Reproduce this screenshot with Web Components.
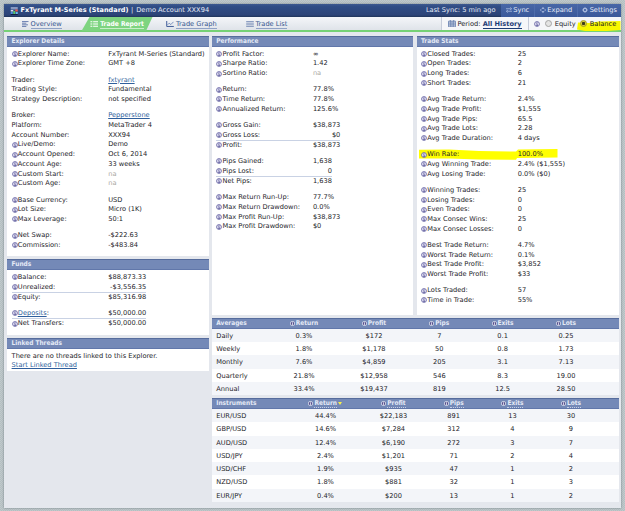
<!DOCTYPE html>
<html lang="en">
<head>
<meta charset="utf-8">
<title>FxTyrant M-Series (Standard)</title>
<style>
  html, body{ height: 100%; }
  body{
    margin: 0;
    padding: 4px 4px 0;
    box-sizing: border-box;
    overflow: hidden;
    background: #bac4c7 repeating-conic-gradient(#b4bfc2 0 25%, #c1cacc 0 50%) 0 0 / 2px 2px;
    font: 6.65px/9.77px "DejaVu Sans", Verdana, sans-serif;
    color: #1c1c28;
    text-rendering: geometricPrecision;
  }
</style>
</head>
<body>
<fx-app></fx-app>

<script>
/* ============================================================
   Data. "?" marks a label with an info icon, "~" a muted value,
   "@" a link, "=" a total under a rule and "!" a marked row.
   ============================================================ */
const EXPLORER = [
  [["?Explorer Name", "FxTyrant M-Series (Standard)"], ["?Explorer Time Zone", "GMT +8"]],
  [["Trader", "@fxtyrant"], ["Trading Style", "Fundamental"], ["Strategy Description", "not specified"]],
  [["Broker", "@Pepperstone"], ["Platform", "MetaTrader 4"], ["Account Number", "XXX94"], ["?Live/Demo", "Demo"],
   ["?Account Opened", "Oct 6, 2014"], ["?Account Age", "33 weeks"], ["?Custom Start", "~na"], ["?Custom Age", "~na"]],
  [["?Base Currency", "USD"], ["?Lot Size", "Micro (1K)"], ["?Max Leverage", "50:1"]],
  [["?Net Swap", "-$222.63"], ["?Commission", "-$483.84"]]
];
const FUNDS = [
  [["?Balance", "$88,873.33"], ["?Unrealized", "-$3,556.35"], ["=?Equity", "$85,316.98"]],
  [["?@Deposits", "$50,000.00"], ["=?Net Transfers", "$50,000.00"]]
];
const PERFORMANCE = [
  [["?Profit Factor", "∞"], ["?Sharpe Ratio", "1.42"], ["?Sortino Ratio", "~na"]],
  [["?Return", "77.8%"], ["?Time Return", "77.8%"], ["?Annualized Return", "125.6%"]],
  [["?Gross Gain", "$38,873"], ["?Gross Loss", "$0"], ["=?Profit", "$38,873"]],
  [["?Pips Gained", "1,638"], ["?Pips Lost", "0"], ["=?Net Pips", "1,638"]],
  [["?Max Return Run-Up", "77.7%"], ["?Max Return Drawdown", "0.0%"], ["?Max Profit Run-Up", "$38,873"], ["?Max Profit Drawdown", "$0"]]
];
const TRADES = [
  [["?Closed Trades", "25"], ["?Open Trades", "2"], ["?Long Trades", "6"], ["?Short Trades", "21"]],
  [["?Avg Trade Return", "2.4%"], ["?Avg Trade Profit", "$1,555"], ["?Avg Trade Pips", "65.5"], ["?Avg Trade Lots", "2.28"], ["?Avg Trade Duration", "4 days"]],
  [["!?Win Rate", "100.0%"], ["?Avg Winning Trade", "2.4% ($1,555)"], ["?Avg Losing Trade", "0.0% ($0)"]],
  [["?Winning Trades", "25"], ["?Losing Trades", "0"], ["?Even Trades", "0"], ["?Max Consec Wins", "25"], ["?Max Consec Losses", "0"]],
  [["?Best Trade Return", "4.7%"], ["?Worst Trade Return", "0.1%"], ["?Best Trade Profit", "$3,852"], ["?Worst Trade Profit", "$33"]],
  [["?Lots Traded", "57"], ["?Time in Trade", "55%"]]
];
const AVERAGES = {
  head: ["Averages", "Return", "Profit", "Pips", "Exits", "Lots"],
  rows: [
    ["Daily", "0.3%", "$172", "7", "0.1", "0.25"],
    ["Weekly", "1.8%", "$1,178", "50", "0.8", "1.73"],
    ["Monthly", "7.6%", "$4,859", "205", "3.1", "7.13"],
    ["Quarterly", "21.8%", "$12,958", "546", "8.3", "19.00"],
    ["Annual", "33.4%", "$19,437", "819", "12.5", "28.50"]
  ]
};
const INSTRUMENTS = {
  head: ["Instruments", "Return", "Profit", "Pips", "Exits", "Lots"],
  sort: 1,
  rows: [
    ["EUR/USD", "44.4%", "$22,183", "891", "13", "30"],
    ["GBP/USD", "14.6%", "$7,284", "312", "4", "9"],
    ["AUD/USD", "12.4%", "$6,190", "272", "3", "7"],
    ["USD/JPY", "2.4%", "$1,201", "71", "2", "4"],
    ["USD/CHF", "1.9%", "$935", "47", "1", "2"],
    ["NZD/USD", "1.8%", "$881", "32", "1", "3"],
    ["EUR/JPY", "0.4%", "$200", "13", "1", "2"]
  ]
};

/* ============================================================
   Icons
   ============================================================ */
const ICONS = {
  info: `<svg viewBox="0 0 11 11"><circle cx="5.5" cy="5.5" r="4.5" fill="#e6e4f5" stroke="#5c5a9c" stroke-width="1.4"/><path d="M5.5 2.2v1.6M4.3 4.9h1.5v3.2M4 8.1h3.2" fill="none" stroke="#45428c" stroke-width="1.3"/></svg>`,
  infoLight: `<svg viewBox="0 0 11 11"><circle cx="5.5" cy="5.5" r="5.2" fill="#fff"/><circle cx="5.5" cy="5.5" r="3.9" fill="#55508f"/><path d="M5.5 2.4v1.4M5.5 4.6v4" stroke="#fff" stroke-width="1.7"/></svg>`,
  logo: `<svg viewBox="0 0 16 16"><path d="M1 0h14v5H1z" fill="#8798c0"/><path d="M1 6h5v3H1z" fill="#d9e2f2"/><path d="M1 10h4v4H1z" fill="#4d8de0"/><path d="M6 8h4v6H6z" fill="#58c46a"/><path d="M10 5h5v4h-5z" fill="#ee5a4a"/><path d="M11 10h4v4h-4z" fill="#65b6ee"/><path d="M1 15h14" stroke="#101d3f" stroke-width="2"/></svg>`,
  overview: `<svg viewBox="0 0 12 11"><path d="M0 1h12M0 4h8M0 7h11M0 10h8" stroke="#5871a7" stroke-width="1.6"/></svg>`,
  report: `<svg viewBox="0 0 14 11"><path d="M0 1.5h3.5M5 1.5h9M0 5.5h3.5M5 5.5h9M0 9.5h3.5M5 9.5h9" stroke="#fff" stroke-width="2"/></svg>`,
  graph: `<svg viewBox="0 0 14 11"><path d="M1 0v10h13" fill="none" stroke="#3d5a98" stroke-width="1.8"/><path d="M2.5 7l3-3 3 2.5 5-5" fill="none" stroke="#6b83b5" stroke-width="1.6"/></svg>`,
  list: `<svg viewBox="0 0 14 11"><path d="M0 1h14M0 4h14M0 7h14M0 10h14" stroke="#6078aa" stroke-width="1.3"/></svg>`,
  calendar: `<svg viewBox="0 0 14 13"><path d="M1 2h12v10H1zM1 5.3h12M1 8.6h12M4 0v12M7 2v10M10 0v12" fill="#fff" stroke="#526ea5" stroke-width="1.3"/></svg>`,
  sync: `<svg viewBox="0 0 12 11"><path d="M0 3h9M3 8h9M8 .5L11.5 3 8 5.5M4 5.5L.5 8 4 10.5" fill="none" stroke="#b9c8e8" stroke-width="1.4"/></svg>`,
  expand: `<svg viewBox="0 0 12 12"><path d="M6 0l3 3.5H3zM6 12l3-3.5H3zM0 6l2.5-2.5v5zM12 6L9.5 3.5v5z" fill="#b9c8e8"/></svg>`,
  gear: `<svg viewBox="0 0 12 12"><circle cx="6" cy="6" r="3.2" fill="none" stroke="#c3d0ec" stroke-width="1.7"/><path d="M6 .3v2M6 9.7v2M.3 6h2M9.7 6h2M2 2l1.4 1.4M8.6 8.6L10 10M10 2L8.6 3.4M2 10l1.4-1.4" stroke="#c3d0ec" stroke-width="1.5"/></svg>`
};

class FxIcon extends HTMLElement{
  constructor(){
    super();
    this.attachShadow({mode:"open"});
  }
  connectedCallback(){
    this.shadowRoot.innerHTML = `
      <style>
        :host{ display: inline-block; flex: none; width: 6px; height: 6px; line-height: 0; }
        svg{ display: block; width: 100%; height: 100%; }
      </style>
      ${ICONS[this.getAttribute("name")]}`;
  }
}
customElements.define("fx-icon", FxIcon);

/* ============================================================
   Title bar
   ============================================================ */
class FxTitlebar extends HTMLElement{
  constructor(){
    super();
    this.attachShadow({mode:"open"});
    this.shadowRoot.innerHTML = `
      <style>
        :host{
          display: flex;
          height: 13px;
          box-sizing: border-box;
          color: #e8edf8;
          line-height: 13px;
          background: linear-gradient(#3d598f, #304d85 20%, #2c4478 85%, #203459);
          white-space: nowrap;
        }
        .name{ display: flex; align-items: center; flex: 1; padding-left: 5.5px; }
        .name fx-icon{ width: 8.5px; height: 8px; margin-right: 2.5px; }
        b{ color: #fff; font-size: 6.5px; }
        .sep{ margin: 0 3px 0 2.5px; }
        .sync{ margin-right: 5.5px; }
        .btn{
          display: flex;
          align-items: center;
          justify-content: center;
          gap: 1.5px;
          box-sizing: border-box;
          height: 12.5px;
          background: linear-gradient(#4867a7, #3a589a);
        }
        .btn + .btn{ border-left: 1px solid #4e6cab; }
      </style>
      <div class="name"><fx-icon name="logo"></fx-icon><b>FxTyrant M-Series (Standard)</b><span class="sep">|</span><span>Demo Account XXX94</span></div>
      <span class="sync">Last Sync: 5 min ago</span>
      <div class="btn" style="width:33px"><fx-icon name="sync"></fx-icon>Sync</div>
      <div class="btn" style="width:43px"><fx-icon name="expand"></fx-icon>Expand</div>
      <div class="btn" style="width:44px"><fx-icon name="gear"></fx-icon>Settings</div>
    `;
  }
}
customElements.define("fx-titlebar", FxTitlebar);

/* ============================================================
   Tabs and period / mode switches
   ============================================================ */
class FxNav extends HTMLElement{
  constructor(){
    super();
    this.attachShadow({mode:"open"});
    this.shadowRoot.innerHTML = `
      <style>
        :host{
          display: flex;
          height: 15px;
          box-sizing: border-box;
          border-bottom: 2px solid #75d175;
          background: linear-gradient(#f4f6f9, #dfe3e9);
          line-height: 8px;
          white-space: nowrap;
        }
        a{ color: #35568f; border-bottom: 1px solid #8fa2c6; margin-top: 1.2px; }
        .tab{ display: flex; align-items: center; gap: 2px; box-sizing: border-box; padding-left: var(--pad, 0); }
        .tab fx-icon{ width: 8px; height: 6px; margin-top: .7px; }
        .on{
          width: 71px;
          height: 14px;
          padding: 0 0 .5px 8.2px;
          background: #7ed480;
          clip-path: polygon(8px 0, 100% 0, 64.5px 100%, 0 100%);
        }
        .on a{ color: #fff; border-color: #c9efc9; font: bold 6.65px/8px "DejaVu Sans Condensed", "DejaVu Sans"; }
        .box{
          display: flex;
          align-items: center;
          box-sizing: border-box;
          border-left: 1px solid #c6ccda;
          background: #f5f6f9;
        }
        .period{ margin-left: auto; width: 87px; padding-left: 6px; }
        .period fx-icon{ width: 8px; height: 7.5px; margin-right: 1.5px; }
        .period a{ margin-left: 2.2px; color: #1d3c75; font-weight: bold; font-size: 6.6px; border-color: #1d3c75; }
        .mode{ width: 93px; padding-left: 5px; position: relative; }
        .radio{
          flex: none;
          box-sizing: border-box;
          width: 7px;
          height: 7px;
          border: 1px solid #a5a5a5;
          border-radius: 50%;
          background: #e3e3e3;
        }
        .radio.sel{ background: radial-gradient(circle, #3d3d1a 0 1.3px, #d8cc3c 2px); border-color: #a79c28; }
        .marker{ position: absolute; left: 47.5px; top: 4px; width: 44px; height: 10px; overflow: visible; }
        .mode > :not(.marker){ position: relative; }
      </style>
      <div class="tab" style="--pad:18px;width:77.5px"><fx-icon name="overview" style="width:6.5px"></fx-icon><a>Overview</a></div>
      <div class="tab on"><fx-icon name="report" style="width:8.5px"></fx-icon><a>Trade Report</a></div>
      <div class="tab" style="--pad:13.5px;width:79px"><fx-icon name="graph"></fx-icon><a>Trade Graph</a></div>
      <div class="tab" style="--pad:14px"><fx-icon name="list"></fx-icon><a>Trade List</a></div>
      <div class="box period"><fx-icon name="calendar"></fx-icon><span>Period:</span><a>All History</a></div>
      <div class="box mode">
        <svg class="marker" viewBox="0 0 44 10"><path d="M1 1.5L12 2l10-1.5L43.5 0v9L30 10H8L0 8.5z" fill="#f8f800"/></svg>
        <fx-icon name="info"></fx-icon>
        <span class="radio" style="margin:0 2.7px 0 5px"></span><span>Equity</span>
        <span class="radio sel" style="margin:0 2.5px 0 4.6px"></span><span>Balance</span>
      </div>
    `;
  }
}
customElements.define("fx-nav", FxNav);

/* ============================================================
   Panel
   ============================================================ */
class FxPanel extends HTMLElement{
  constructor(){
    super();
    this.attachShadow({mode:"open"});
  }
  connectedCallback(){
    this.shadowRoot.innerHTML = `
      <style>
        :host{ display: block; box-sizing: border-box; background: #fff; }
        header{
          height: 10.5px;
          box-sizing: border-box;
          padding-left: 4.3px;
          border-top: 1px solid #566c9c;
          border-bottom: 1px solid #6177aa;
          background: #7489b7;
          color: #e4eaf6;
          font: bold 6.5px/8.5px "DejaVu Sans Condensed", "DejaVu Sans";
        }
        .body{ padding: 2.9px 4.3px 0; }
      </style>
      <header>${this.getAttribute("heading")}</header>
      <div class="body"><slot></slot></div>`;
  }
}
customElements.define("fx-panel", FxPanel);

/* ============================================================
   Label / value groups
   ============================================================ */
class FxStats extends HTMLElement{
  constructor(){
    super();
    this.attachShadow({mode:"open"});
  }
  set groups(groups){
    this.shadowRoot.innerHTML = `
      <style>
        :host{ display: flex; flex-direction: column; align-items: flex-start; gap: 6.3px; white-space: nowrap; }
        .group{ display: grid; grid-template-columns: 96.6px auto; }
        .row{ display: grid; grid-template-columns: subgrid; grid-column: 1 / -1; position: relative; }
        .label{ display: flex; align-items: center; height: 9.77px; }
        .label fx-icon{ margin: -1px .2px 0 0; }
        .sum .value{ text-align: right; }
        .total{ border-top: 1px solid #c9d2e4; margin-top: -.5px; }
        .muted{ color: #aaa7a2; }
        .link{ color: #2f5f9c; text-decoration: underline; text-decoration-thickness: .6px; text-underline-offset: 1px; }
        .marker{ position: absolute; left: -2px; top: -1.3px; width: 139px; height: 11px; }
        .label, .value{ position: relative; }
      </style>
      ${groups.map(g => `<div class="group ${g.some(r => r[0][0] === "=") ? "sum" : ""}">${g.map(r => this.row(r)).join("")}</div>`).join("")}`;
  }
  row([label, value]){
    const total = label.startsWith("=");
    const marked = label.startsWith("!");
    const info = label.includes("?");
    const link = label.includes("@");
    const text = label.replace(/[=!?@]/g, "");
    const cls = value[0] === "~" ? "muted" : value[0] === "@" ? "link" : "";
    return `<div class="row ${total ? "total" : ""}">
      ${marked ? `<svg class="marker" viewBox="0 0 139 11"><path d="M0 .8L30 .5 60 2l37 .6L99 .5 138.500 0v8.500L98 9l-1 1.800-37-.3L30 9.500H0z" fill="#ffff00"/></svg>` : ""}
      <span class="label">${info ? `<fx-icon name="info"></fx-icon>` : ""}<span>${link ? `<span class="link">${text}</span>` : text}:</span></span>
      <span class="value"><span class="${cls}">${value.replace(/^[~@]/, "")}</span></span>
    </div>`;
  }
}
customElements.define("fx-stats", FxStats);

/* ============================================================
   Striped table
   ============================================================ */
class FxTable extends HTMLElement{
  constructor(){
    super();
    this.attachShadow({mode:"open"});
  }
  set data({head, rows, sort}){
    this.shadowRoot.innerHTML = `
      <style>
        :host{ display: block; white-space: nowrap; }
        .row{
          display: grid;
          grid-template-columns: var(--cols);
          height: 13.25px;
          line-height: 14px;
          text-align: center;
          background: #fff;
        }
        .row:nth-of-type(even){ background: #f3f5f9; }
        .row > :first-child{ text-align: left; padding-left: 4.3px; justify-content: flex-start; }
        .head{
          height: 11px;
          box-sizing: border-box;
          border-top: 1px solid #566c9c;
          border-bottom: 1px solid #6177aa;
          background: #7489b7;
          color: #e4eaf6;
          font: bold 6.5px/9px "DejaVu Sans Condensed", "DejaVu Sans";
        }
        .head span{ display: flex; align-items: center; justify-content: center; gap: 1px; }
        .head fx-icon{ width: 5px; height: 5px; }
        .head a{ border-bottom: 1px dotted ${sort ? "#c5cfe6" : "transparent"}; height: 8px; }
        i{ border: 2.5px solid transparent; border-top: 3px solid #f7f04a; border-bottom: 0; margin-left: .5px; }
      </style>
      <div class="row head">${head.map((h, n) => n
        ? `<span><fx-icon name="infoLight"></fx-icon><a>${h}</a>${n === sort ? "<i></i>" : ""}</span>`
        : `<span>${h}</span>`).join("")}</div>
      ${rows.map(r => `<div class="row">${r.map(c => `<span>${c}</span>`).join("")}</div>`).join("")}`;
  }
}
customElements.define("fx-table", FxTable);

/* ============================================================
   App
   ============================================================ */
class FxApp extends HTMLElement{
  constructor(){
    super();
    this.attachShadow({mode:"open"});
    this.shadowRoot.innerHTML = `
      <style>
        :host{
          display: block;
          width: 617px;
          height: 504px;
          box-sizing: border-box;
          background: #e4e7ed;
          box-shadow: 0 0 2px rgba(70, 85, 95, .6);
        }
        main{ display: flex; gap: 3px; padding: 4.3px 2px 0 3.3px; }
        .side{ display: flex; flex-direction: column; gap: 3px; width: 201.7px; }
        .wide{ display: flex; flex-direction: column; gap: 3px; width: 407px; }
        .pair{ display: grid; grid-template-columns: 201.5px 202.2px; gap: 3.3px; height: 278.5px; }
        .explorer{ height: 220.2px; }
        .funds{ height: 75.8px; }
        .threads{ height: 33px; }
        .threads p{ margin: 0; line-height: 9px; white-space: nowrap; }
        .threads a{ color: #2f5f9c; text-decoration: underline; text-decoration-thickness: .6px; text-underline-offset: 1px; }
        .avg{ --cols: 55px 74px 66px 64.6px 62px 64.8px; }
        .ins{ --cols: 78px 71px 65px 55.4px 62.2px 54.8px; }
      </style>
      <fx-titlebar></fx-titlebar>
      <fx-nav></fx-nav>
      <main>
        <div class="side">
          <fx-panel class="explorer" heading="Explorer Details"><fx-stats id="explorer"></fx-stats></fx-panel>
          <fx-panel class="funds" heading="Funds"><fx-stats id="funds"></fx-stats></fx-panel>
          <fx-panel class="threads" heading="Linked Threads">
            <p>There are no threads linked to this Explorer.</p>
            <p><a>Start Linked Thread</a></p>
          </fx-panel>
        </div>
        <div class="wide">
          <div class="pair">
            <fx-panel heading="Performance"><fx-stats id="performance"></fx-stats></fx-panel>
            <fx-panel heading="Trade Stats"><fx-stats id="trades"></fx-stats></fx-panel>
          </div>
          <fx-table class="avg" id="averages"></fx-table>
          <fx-table class="ins" id="instruments"></fx-table>
        </div>
      </main>
    `;
    const get = id => this.shadowRoot.getElementById(id);
    get("explorer").groups = EXPLORER;
    get("funds").groups = FUNDS;
    get("performance").groups = PERFORMANCE;
    get("trades").groups = TRADES;
    get("averages").data = AVERAGES;
    get("instruments").data = INSTRUMENTS;
  }
}
customElements.define("fx-app", FxApp);
</script>
</body>
</html>
